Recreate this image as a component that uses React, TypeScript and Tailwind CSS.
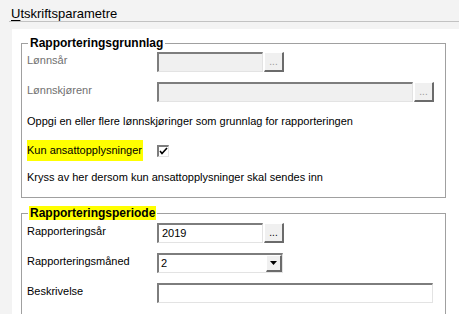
import React from "react";

const sunken =
  "border-t-2 border-l-2 border-r border-b border-t-[#7d7d7d] border-l-[#7d7d7d] border-r-[#e3e3e3] border-b-[#e3e3e3]";
const raised =
  "border-t border-l border-r-2 border-b-2 border-t-white border-l-white border-r-[#6b6b6b] border-b-[#6b6b6b] bg-[#f0f0f0]";

function DotsButton({ disabled }: { disabled?: boolean }) {
  return (
    <div
      className={`ml-[1px] w-[20px] h-[20px] flex items-end justify-center pb-[3px] text-[10px] leading-[10px] ${raised} ${
        disabled ? "text-[#9a9a9a]" : "text-black"
      }`}
    >
      ...
    </div>
  );
}

function Label({ children, gray }: { children: React.ReactNode; gray?: boolean }) {
  return (
    <div className={`w-[130px] shrink-0 pt-[2px] leading-[13px] ${gray ? "text-[#707070]" : "text-black"}`}>
      {children}
    </div>
  );
}

export default function App() {
  return (
    <div
      className="w-[459px] h-[314px] overflow-hidden bg-[#f3f3f3] text-[11px] text-black flex flex-col"
      style={{ fontFamily: '"Liberation Sans", Arial, sans-serif' }}
    >
      {/* HEADER */}
      <div className="ml-[9px] h-[23px] border-b border-[#c2c2c2] pl-[2px] pt-[6px] text-[13px] leading-[15px]">
        <span className="underline underline-offset-2">U</span>tskriftsparametre
      </div>

      {/* PANEL */}
      <div className="flex-1 ml-[12px] mt-[7px] bg-white pt-[7px] pl-[9px] pr-[13px]">

        {/* RAPPORTERINGSGRUNNLAG */}
        <fieldset className="border border-[#a0a0a0] pl-[5px] pb-[13px]">
          <legend className="ml-[1px] px-[2px] text-[12px] leading-[14px] font-bold">Rapporteringsgrunnlag</legend>

          <div className="mt-[2px] flex items-start">
            <Label gray>Lønnsår</Label>
            <div className={`w-[106px] h-[20px] bg-[#f0f0f0] ${sunken}`} />
            <DotsButton disabled />
          </div>

          <div className="mt-[10px] flex items-start">
            <Label gray>Lønnskjørenr</Label>
            <div className={`w-[256px] h-[20px] bg-[#f0f0f0] ${sunken}`} />
            <DotsButton disabled />
          </div>

          <div className="mt-[13px] leading-[13px]">
            Oppgi en eller flere lønnskjøringer som grunnlag for rapporteringen
          </div>

          <div className="mt-[12px] flex items-center">
            <div className="w-[130px] shrink-0">
              <span className="inline-block h-[21px] leading-[21px] bg-[#ffff00] pr-[1px]">Kun ansattopplysninger</span>
            </div>
            <div className={`w-[12px] h-[12px] bg-white flex items-center justify-center ${sunken}`}>
              <svg width="9" height="8" viewBox="0 0 9 8">
                <path d="M1 4 L3 6.5 L8 1" fill="none" stroke="black" strokeWidth="1.6" />
              </svg>
            </div>
          </div>

          <div className="mt-[10px] leading-[13px]">
            Kryss av her dersom kun ansattopplysninger skal sendes inn
          </div>
        </fieldset>

        {/* RAPPORTERINGSPERIODE */}
        <fieldset className="mt-[8px] border border-[#a0a0a0] pl-[5px] pb-[20px]">
          <legend className="ml-[1px] px-[1px] text-[12px] leading-[14px] font-bold">
            <span className="bg-[#ffff00] px-[1px]">Rapporteringsperiode</span>
          </legend>

          <div className="mt-[3px] flex items-start">
            <Label>Rapporteringsår</Label>
            <div className={`w-[106px] h-[20px] bg-white pl-[3px] leading-[17px] ${sunken}`}>2019</div>
            <DotsButton />
          </div>

          <div className="mt-[10px] flex items-start">
            <Label>Rapporteringsmåned</Label>
            <div className={`w-[126px] h-[20px] bg-white flex items-center justify-between pl-[2px] ${sunken}`}>
              <span className="leading-[13px]">2</span>
              <div className={`w-[16px] h-[17px] flex items-center justify-center ${raised}`}>
                <svg width="7" height="4" viewBox="0 0 7 4">
                  <path d="M0 0 H7 L3.5 4 Z" fill="black" />
                </svg>
              </div>
            </div>
          </div>

          <div className="mt-[10px] flex items-start">
            <Label>Beskrivelse</Label>
            <div className={`w-[276px] h-[20px] bg-white ${sunken}`} />
          </div>
        </fieldset>
      </div>
    </div>
  );
}
